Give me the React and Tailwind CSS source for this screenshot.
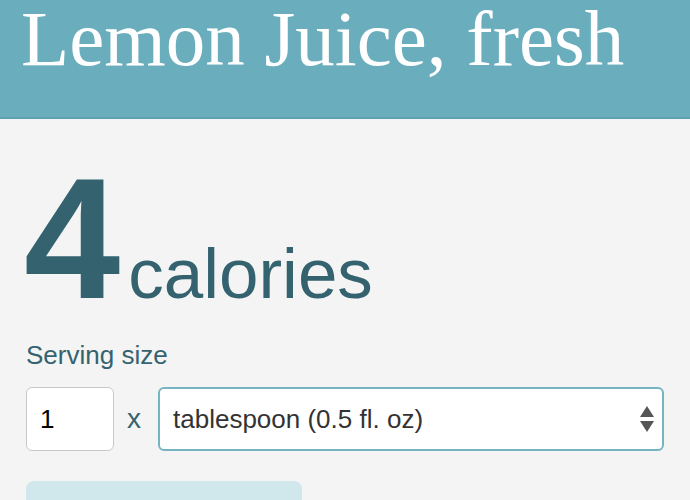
import React from "react";

export default function App() {
  return (
    <div className="w-[690px] h-[500px] overflow-hidden bg-[#f4f4f4] font-['Liberation_Sans',Arial,sans-serif]">
      {/* Header */}
      <div className="h-[119px] bg-[#6aaebe] border-b-2 border-[#5ea2b2] px-[21px] pt-px">
        <h1 className="font-['Liberation_Serif','Times_New_Roman',serif] text-[79px] leading-[76px] text-white whitespace-nowrap">
          Lemon Juice, fresh
        </h1>
      </div>

      <div className="pl-[24px] pt-[33px]">
        {/* Calories */}
        <div className="flex items-baseline gap-[8px] text-[#34636f]">
          <span className="text-[173px] font-bold leading-none">4</span>
          <span className="text-[71px] leading-none">calories</span>
        </div>

        {/* Serving size */}
        <div className="pl-[2px] mt-[17px]">
          <div className="text-[26px] leading-none text-[#34636f]">Serving size</div>
          <div className="flex items-center mt-[19px] h-[64px]">
            <div className="w-[88px] h-[64px] bg-white border border-[#c8c8c8] rounded-md flex items-center pl-[13px] text-[26px] text-black">
              1
            </div>
            <span className="ml-[13px] mr-[17px] text-[28px] text-[#34636f] leading-none">x</span>
            <div className="w-[506px] h-[64px] bg-white border-2 border-[#76b4c2] rounded-md flex items-center justify-between pl-[13px] pr-[7px]">
              <span className="text-[26px] text-[#333]">tablespoon (0.5 fl. oz)</span>
              <svg width="16" height="28" viewBox="0 0 16 28">
                <path d="M8 1 L15 12 L1 12 Z" fill="#555" />
                <path d="M1 16 L15 16 L8 27 Z" fill="#555" />
              </svg>
            </div>
          </div>
        </div>

        {/* Action button */}
        <div className="ml-[2px] mt-[30px] w-[276px] h-[60px] bg-[#d0e7ec] rounded-lg pt-[18px] pl-[38px] text-[26px] leading-none text-[#b5d6dd]">
          Compare Foods
        </div>
      </div>
    </div>
  );
}
